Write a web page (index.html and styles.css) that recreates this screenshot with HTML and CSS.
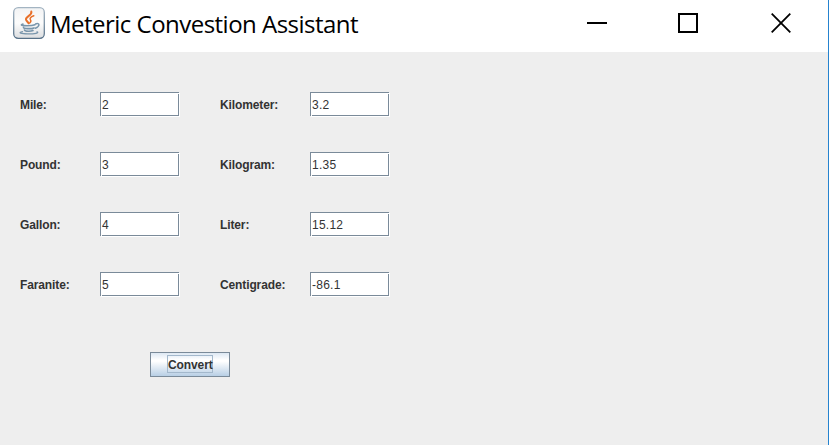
FILE: index.html
```html
<!DOCTYPE html>
<html lang="en">
<head>
<meta charset="utf-8">
<title>Meteric Convestion Assistant</title>
<link rel="stylesheet" href="styles.css">
</head>
<body>
<div class="window">
  <header class="titlebar">
    <svg class="app-icon" width="32" height="32" viewBox="0 0 32 32">
      <defs>
        <linearGradient id="face" x1="0" y1="0" x2="0" y2="1"><stop offset="0" stop-color="#f2f3f4"/><stop offset=".5" stop-color="#fcfcfc"/><stop offset="1" stop-color="#dcdee0"/></linearGradient>
        <linearGradient id="edge" x1="0" y1="0" x2="0" y2="1"><stop offset="0" stop-color="#a3b4c2"/><stop offset="1" stop-color="#577188"/></linearGradient>
      </defs>
      <rect x=".7" y=".7" width="30.6" height="30.6" rx="4.5" fill="url(#face)" stroke="url(#edge)" stroke-width="1.3"/>
      <g fill="none" stroke-linecap="round">
        <path d="M18.300 4.500C19.500 8.500 12.400 9.500 13 12.500C13.300 14 15 15 15.600 16.300" stroke="#e8702a" stroke-width="2"/>
        <path d="M20.800 8.800C17.500 10 16.400 11.300 17.500 12.900C18.300 14 17.800 15 16.700 16" stroke="#e8702a" stroke-width="1.500"/>
        <path d="M10 17.100C6.500 18 9 18.700 14 18.700C18 18.700 20.500 18.300 22 17.700" stroke="#7895ab" stroke-width="1.500"/>
        <path d="M22.500 17C26.600 15.300 27.500 19 22.400 21.200" stroke="#7895ab" stroke-width="1.500"/>
        <path d="M10.500 20.300C10 22 18.500 22 21 20.900M11.500 23C12 24.600 18 24.500 20 23.500" stroke="#7895ab" stroke-width="1.600"/>
        <path d="M9.500 24.700C4.500 25.700 8 26.900 15 26.900C22 26.900 26.500 25.900 24 24.800" stroke="#7895ab" stroke-width="1.300"/>
      </g>
    </svg>
    <h1 class="title">Meteric Convestion Assistant</h1>
    <div class="controls">
      <svg width="20" height="20" viewBox="0 0 20 20"><path d="M0 10H20" stroke="#000" stroke-width="2"/></svg>
      <svg class="maximize" width="20" height="20" viewBox="0 0 20 20"><rect x="1" y="1" width="18" height="18" fill="none" stroke="#000" stroke-width="2"/></svg>
      <svg width="20" height="20" viewBox="0 0 20 20"><path d="M.7.700 19.300 19.300M19.300.700.700 19.300" fill="none" stroke="#000" stroke-width="1.800"/></svg>
    </div>
  </header>
  <main class="content">
    <div class="form">
      <span class="label">Mile:</span><span class="field">2</span><span class="label">Kilometer:</span><span class="field">3.2</span>
      <span class="label">Pound:</span><span class="field">3</span><span class="label">Kilogram:</span><span class="field">1.35</span>
      <span class="label">Gallon:</span><span class="field">4</span><span class="label">Liter:</span><span class="field">15.12</span>
      <span class="label">Faranite:</span><span class="field">5</span><span class="label">Centigrade:</span><span class="field">-86.1</span>
    </div>
    <button class="convert" type="button"><span class="focus">Convert</span></button>
  </main>
</div>
</body>
</html>
```
FILE: styles.css
```css
* { box-sizing: border-box; }
body { margin: 0; overflow: hidden; }
.window {
  height: 445px;
  border-right: 1px solid #2583cf;
  background: #eee;
  font: 12px/15px "Liberation Sans", Arial, sans-serif;
  color: #333;
}
.titlebar {
  display: flex;
  height: 52px;
  padding: 7px 37px 0 13px;
  background: #fff;
}
.app-icon { flex: none; }
.title {
  margin: 0 0 0 5px;
  font: 24px/34px "Open Sans", "Noto Sans", sans-serif;
  letter-spacing: -.52px;
  color: #000;
  white-space: nowrap;
}
.controls {
  display: flex;
  justify-content: space-between;
  width: 204px;
  margin: 6px 0 0 auto;
}
.maximize { margin-right: 2px; }
.content { padding: 40px 20px 0; }
.form {
  display: grid;
  grid-template-columns: 80px 120px 90px 80px;
  grid-auto-rows: 25px;
  row-gap: 35px;
}
.label {
  font-weight: bold;
  line-height: 27px;
  letter-spacing: -.12px;
}
.field {
  width: 80px;
  height: 25px;
  padding-left: 2px;
  line-height: 27px;
  letter-spacing: .25px;
  background:
    linear-gradient(#7a8a99, #7a8a99) 0 0 / 79px 1px,
    linear-gradient(#7a8a99, #7a8a99) 0 0 / 1px 24px,
    linear-gradient(#7a8a99, #7a8a99) 78px 2px / 1px 22px,
    linear-gradient(#7a8a99, #7a8a99) 2px 23px / 77px 1px,
    linear-gradient(#eee, #eee) 79px 0 / 1px 1px,
    linear-gradient(#eee, #eee) 0 24px / 1px 1px,
    #fff;
  background-repeat: no-repeat;
}
.convert {
  display: flex;
  align-items: flex-start;
  justify-content: center;
  width: 80px;
  height: 25px;
  margin: 55px 0 0 130px;
  padding: 2px 0 0;
  border: 1px solid #7a8a99;
  background: linear-gradient(#dde8f3, #fff 30%, #fff 36%, #b8cfe5);
  font: bold 12px/19px "Liberation Sans", Arial, sans-serif;
  color: #333;
}
.focus {
  width: 46px;
  height: 18px;
  border: 1px solid #a3b8cc;
  text-align: left;
  white-space: nowrap;
  letter-spacing: -.1px;
}
```
